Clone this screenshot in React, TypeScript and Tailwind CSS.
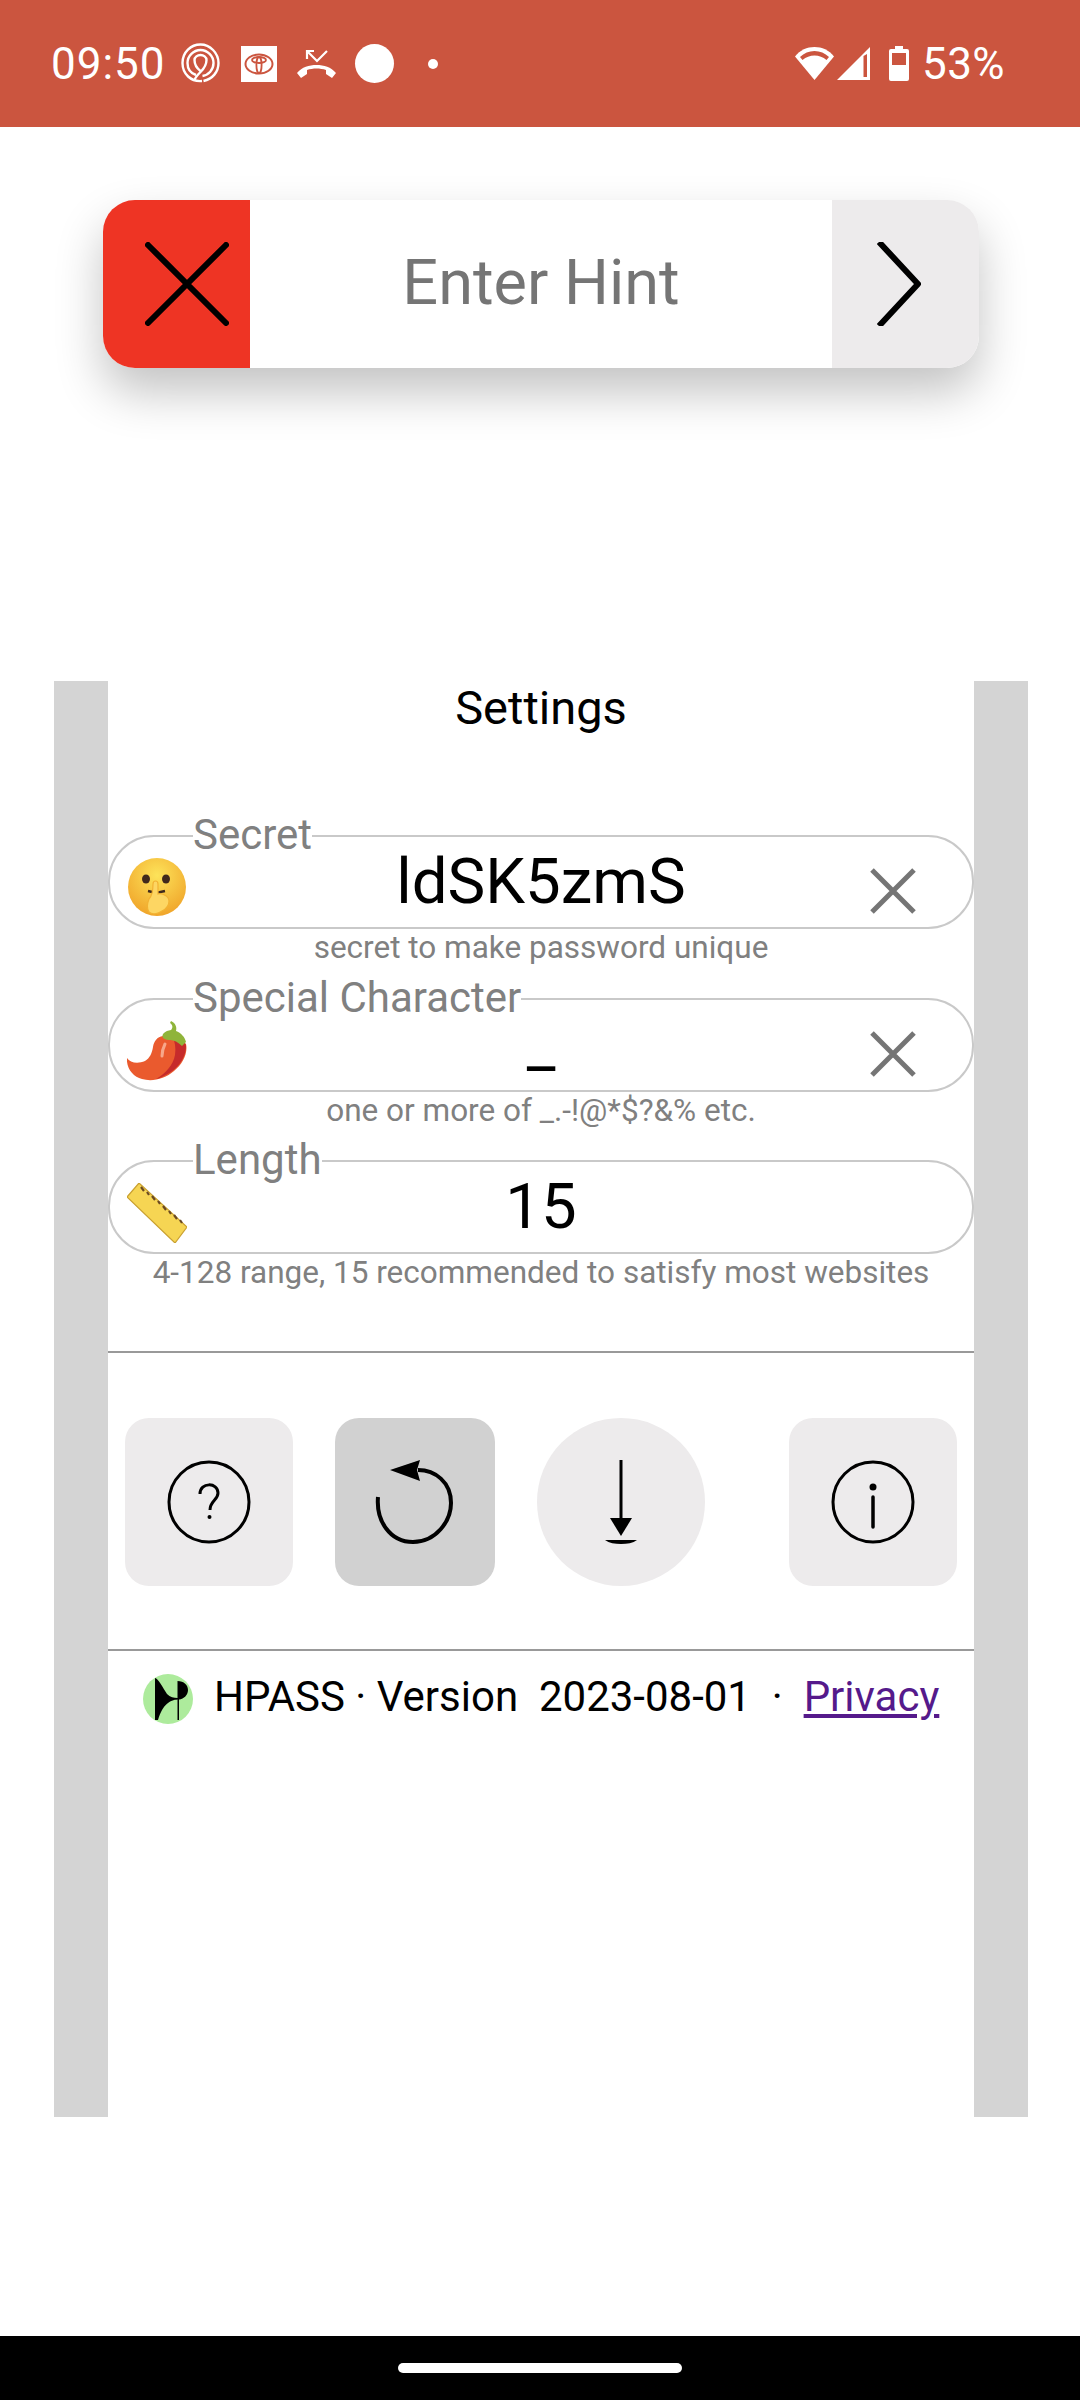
import type { ReactNode } from 'react';

function StatusBar() {
  return (
    <div className="h-[127px] bg-[#cb553f] flex items-center pl-[51px] pr-[75px] text-white text-[44px] font-['Roboto',sans-serif] shrink-0">
      <span className="leading-none tracking-[1px] w-[130px]">09:50</span>
      <svg width="39" height="40" viewBox="0 0 39 40" fill="none" stroke="white" strokeWidth="2.4" className="-mt-[1px]">
        <path d="M21 38C10 39 1.500 31 1.500 20S10 1.500 19.500 1.500 37.500 10 37.500 20c0 9-6 16-15 18" />
        <path d="M15 32C9 30 6.500 25 6.500 20c0-7 6-13 13-13s13 6 13 13c0 7-5 12-11 13" />
        <path d="M19.500 28c-4-3-6-7-6-11 0-3 3-5 6-5s6 2 6 5c0 5-3 9-6 12-3 3-5 5-6 8" />
      </svg>
      <svg width="36" height="36" viewBox="0 0 36 36" className="ml-[21px]">
        <rect width="36" height="36" fill="white" />
        <ellipse cx="18" cy="18" rx="13.500" ry="9.500" fill="none" stroke="#cb553f" strokeWidth="2" />
        <ellipse cx="18" cy="14" rx="7" ry="3" fill="none" stroke="#cb553f" strokeWidth="1.800" />
        <ellipse cx="18" cy="19" rx="2.600" ry="8" fill="none" stroke="#cb553f" strokeWidth="1.800" />
      </svg>
      <svg width="39" height="30" viewBox="0 0 39 30" className="ml-[20px]">
        <path d="M10 10V2h7M10 2l10 10L30 2" fill="none" stroke="white" strokeWidth="2.200" />
        <path d="M0 24c5-6 12-8 19.500-8S34 18 39 24l-4 5-6-4v-4c-6-2-13-2-19 0v4l-6 4z" fill="white" />
      </svg>
      <div className="w-[39px] h-[39px] rounded-full bg-white ml-[19px]" />
      <div className="w-[10px] h-[10px] rounded-full bg-white ml-[34px]" />
      <div className="flex-1" />
      <svg width="39" height="33" viewBox="0 0 39 33" fill="none">
        <path d="M19.500 33L0 9.500C5 3 12 0 19.500 0S34 3 39 9.500z" fill="white" />
        <path d="M5 10c4-4 9-6 14.500-6S30 6 34 10l-2.500 3c-3.500-3-7.500-4.500-12-4.500S11 10 7.500 13z" fill="#cb553f" />
      </svg>
      <svg width="33" height="33" viewBox="0 0 33 33" className="ml-[3px]">
        <path d="M33 0v33H0z" fill="white" />
        <path d="M26.500 9v21H30V7z" fill="#cb553f" />
      </svg>
      <svg width="20" height="35" viewBox="0 0 20 35" className="ml-[19px]">
        <path d="M6 0h8v3h4a2 2 0 012 2v28a2 2 0 01-2 2H2a2 2 0 01-2-2V5a2 2 0 012-2h4z" fill="white" />
        <rect x="3" y="7" width="14" height="12" fill="#cb553f" />
      </svg>
      <span className="leading-none ml-[13px] tracking-[0.4px]">53%</span>
    </div>
  );
}

function HintBar() {
  return (
    <div className="mt-[73px] ml-[103px] w-[876px] h-[168px] rounded-[32px] flex overflow-hidden shadow-[0_24px_48px_rgba(0,0,0,0.24)] bg-white shrink-0">
      <div className="w-[147px] bg-[#ee3424] flex items-center justify-center">
        <svg width="84" height="84" viewBox="0 0 84 84" stroke="black" strokeWidth="6" strokeLinecap="round" className="ml-[20px]">
          <path d="M3 3l78 78M81 3L3 81" />
        </svg>
      </div>
      <div className="flex-1 flex items-center justify-center text-[63px] text-[#757575] font-['Roboto',sans-serif] -mt-[2px]">
        Enter Hint
      </div>
      <div className="w-[147px] bg-[#edebec] flex items-center pl-[45px]">
        <svg width="44" height="84" viewBox="0 0 44 84" fill="none" stroke="black" strokeWidth="6" strokeLinejoin="round">
          <path d="M2 0l39 42L2 84" />
        </svg>
      </div>
    </div>
  );
}

function ClearIcon() {
  return (
    <svg width="46" height="46" viewBox="0 0 46 46" stroke="#757575" strokeWidth="5">
      <path d="M2 2l42 42M44 2L2 44" />
    </svg>
  );
}

function ShushEmoji() {
  return (
    <svg width="60" height="60" viewBox="0 0 60 60">
      <defs>
        <radialGradient id="face" cx="50%" cy="30%" r="70%">
          <stop offset="0%" stopColor="#fde35a" />
          <stop offset="100%" stopColor="#f0a52a" />
        </radialGradient>
      </defs>
      <circle cx="30" cy="29" r="29" fill="url(#face)" />
      <ellipse cx="19" cy="21" rx="4" ry="4.500" fill="#40291c" />
      <ellipse cx="39" cy="21" rx="4" ry="4.500" fill="#40291c" />
      <path d="M21 33l8 2 9-2" stroke="#40291c" strokeWidth="2.500" fill="none" />
      <path d="M26 26c0-4 5-4 5 0v10c4-1 11 2 11 7 0 4-3 8-7 10-4 3-10 4-13 1-2-3-2-8 0-13 3-3 4-8 4-15z" fill="#fdd663" stroke="#f2b233" strokeWidth="1.200" />
    </svg>
  );
}

function ChiliEmoji() {
  return (
    <svg width="60" height="60" viewBox="0 0 60 60">
      <path d="M0 37c3 5 11 6 18 3 5-3 7-8 8-14 1-6 4-10 10-11 8 0 18 3 23 8 2 9-3 20-12 27-9 8-22 11-32 8C6 56-1 47 0 37z" fill="#ea5a2e" />
      <path d="M45 14c7 1 13 5 14 11 0 10-6 20-15 26-5 3-10 6-15 7 10-6 17-14 19-24 1-7 0-14-3-20z" fill="#c62b2b" />
      <path d="M36 17c-2-4 2-7 8-8 2-2 2-5-1-7l1-2c5 2 6 7 5 10 5 2 9 6 10 11l-4 4c-4-4-8-6-12-6-2 0-4 0-7-2z" fill="#8fb43a" />
      <path d="M38 23c-2 4-3 8-3 12" stroke="#f7a78a" strokeWidth="3" strokeLinecap="round" fill="none" />
    </svg>
  );
}

function RulerEmoji() {
  return (
    <svg width="60" height="60" viewBox="0 0 60 60">
      <path d="M12 0l48 44-12 16L0 14z" fill="#f6d553" stroke="#c9a030" strokeWidth="1.200" />
      <path d="M14 4l3 4M20 9l2 3M25 13l3 4M31 18l2 3M36 23l3 4M42 28l2 3M47 32l3 4M53 37l2 3" stroke="#6b4a22" strokeWidth="2.200" />
    </svg>
  );
}

function Field({ label, value, hint, icon, clear }: { label: string; value: string; hint: string; icon: ReactNode; clear?: boolean }) {
  return (
    <div className="h-[162.500px] flex flex-col">
      <fieldset className="h-[117px] border-2 border-[#c9c9c9] rounded-[46px] pl-[17px] pr-[17px] shrink-0">
        <legend className="ml-[66px] text-[42px] leading-[46px] pb-[2px] text-[#808080]">{label}</legend>
        <div className="grid grid-cols-[1fr_auto_1fr] items-center h-[68px]">
          <div className="-mt-[12px]">{icon}</div>
          <div className="text-[63.500px] leading-[68px] text-black -mt-[24px]">{value}</div>
          <div className="flex justify-end mr-[39px] -mt-[6px]">{clear && <ClearIcon />}</div>
        </div>
      </fieldset>
      <div className="text-[31.500px] leading-[38px] text-[#808080] text-center whitespace-nowrap">{hint}</div>
    </div>
  );
}

function SettingsPanel() {
  return (
    <div className="mt-[313px] ml-[54px] w-[974px] h-[1436px] border-x-[54px] border-[#d4d4d4] font-['Roboto',sans-serif] shrink-0">
      <div className="text-center text-[47px] leading-[54px] text-black">Settings</div>
      <div className="mt-[77px]">
        <Field label="Secret" value="ldSK5zmS" hint="secret to make password unique" icon={<ShushEmoji />} clear />
        <Field label="Special Character" value="_" hint="one or more of _.-!@*$?&% etc." icon={<ChiliEmoji />} clear />
        <Field label="Length" value="15" hint="4-128 range, 15 recommended to satisfy most websites" icon={<RulerEmoji />} />
      </div>
      <div className="mt-[51px] h-[2px] bg-[#999999]" />
      <div className="flex items-center mt-[65px] pl-[17px]">
        <div className="w-[168px] h-[168px] rounded-[24px] bg-[#edebec] flex items-center justify-center">
          <svg width="84" height="84" viewBox="0 0 84 84" fill="none" stroke="black" strokeWidth="3">
            <circle cx="42" cy="42" r="40" />
            <path d="M33 34c0-12 18-12 18-1 0 7-8 8-8 17" strokeWidth="3" />
            <circle cx="42.500" cy="57" r="2" fill="black" stroke="none" />
          </svg>
        </div>
        <div className="w-[160px] h-[168px] rounded-[24px] bg-[#d1d1d1] ml-[42px] flex items-center justify-center">
          <svg width="80" height="84" viewBox="0 0 80 84" fill="none" stroke="black" strokeWidth="4" className="-ml-[4px]">
            <path d="M5 37c-2 24 12 45 35 45s38-21 38-39C78 22 62 10 45 10" />
            <path d="M17 10L47 0l-3 10 3 11z" fill="black" stroke="none" />
          </svg>
        </div>
        <div className="w-[168px] h-[168px] rounded-full bg-[#edebec] ml-[42px] flex items-center justify-center">
          <svg width="32" height="84" viewBox="0 0 32 84" fill="black">
            <rect x="14.500" y="0" width="3" height="60" />
            <path d="M5 58h22L16 76z" />
            <path d="M0 80h32c-4 3-10 4-16 4S4 83 0 80z" />
          </svg>
        </div>
        <div className="w-[168px] h-[168px] rounded-[24px] bg-[#edebec] ml-[84px] flex items-center justify-center">
          <svg width="84" height="84" viewBox="0 0 84 84" fill="none" stroke="black" strokeWidth="3">
            <circle cx="42" cy="42" r="40" />
            <circle cx="42" cy="27" r="3.500" fill="black" stroke="none" />
            <path d="M42 37v30" strokeLinecap="round" strokeWidth="3.500" />
          </svg>
        </div>
      </div>
      <div className="mt-[63px] h-[2px] bg-[#999999]" />
      <div className="flex items-center mt-[23px] pl-[35px] text-[42px] text-black whitespace-pre">
        <svg width="50" height="50" viewBox="0 0 50 50" className="shrink-0">
          <circle cx="25" cy="25" r="25" fill="#adeb9c" />
          <path d="M12 4c3 0 8 10 12 16 3 3 7 4 10.500 4V7C41 7 45 11 45 16c0 5-4 9-9 9.500V46h-1.500V25.500C27 26 20 30 15 46h-3z" fill="black" />
        </svg>
        <div className="ml-[21px] leading-[46px] mb-[4px]">
          HPASS · Version  2023-08-01  ·  <a href="#" className="text-[#551a8b] underline">Privacy</a>
        </div>
      </div>
    </div>
  );
}

export default function App() {
  return (
    <div className="w-[1080px] h-[2400px] bg-white flex flex-col overflow-hidden">
      <StatusBar />
      <HintBar />
      <SettingsPanel />
      <div className="mt-auto h-[64px] bg-black flex items-center justify-center shrink-0">
        <div className="w-[284px] h-[10px] rounded-full bg-white" />
      </div>
    </div>
  );
}
